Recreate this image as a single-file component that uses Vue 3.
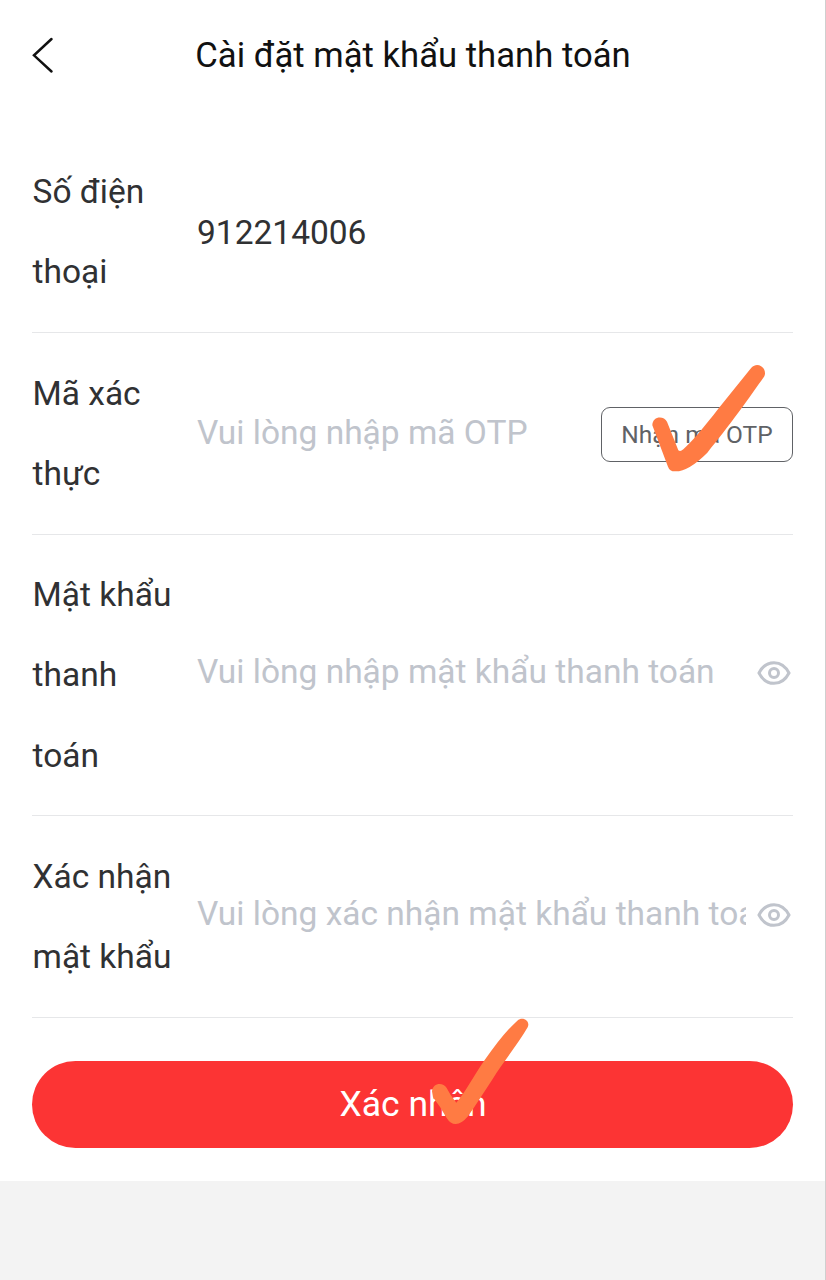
<script setup>
const rows = [
  { label: 'Số điện thoại', value: '912214006', size: 'two' },
  { label: 'Mã xác thực', hint: 'Vui lòng nhập mã OTP', otp: true, size: 'two' },
  { label: 'Mật khẩu thanh toán', hint: 'Vui lòng nhập mật khẩu thanh toán', eye: true, size: 'three' },
  { label: 'Xác nhận mật khẩu', hint: 'Vui lòng xác nhận mật khẩu thanh toán', eye: true, size: 'two' },
]
</script>

<template>
  <div class="page">
    <main class="sheet">
      <header class="bar">
        <svg class="back" width="24" height="38" viewBox="0 0 24 38"><path d="M19.5 3 2 19.3 19.5 35.5" /></svg>
        <h1>Cài đặt mật khẩu thanh toán</h1>
      </header>
      <section class="form">
        <div v-for="row in rows" :key="row.label" class="row" :class="row.size">
          <label>{{ row.label }}</label>
          <span v-if="row.value" class="field value">{{ row.value }}</span>
          <span v-else class="field hint" :class="{ raised: row.eye }">{{ row.hint }}</span>
          <button v-if="row.otp" class="otp">
            Nhận mã OTP
            <svg class="tick" width="236" height="140" viewBox="0 0 708 420"><path d="M187 226C187 197 222 196 231 215L265 301Q271 306 280 298C306 275 342 232 386 175L484 53C504 32 533 56 523 79C484 135 414 233 352 308Q296 364 257 364Q239 365 234 350Z" /></svg>
          </button>
          <svg v-if="row.eye" class="eye" width="34" height="26" viewBox="0 0 34 26"><path d="M2 13C9 -.8 25 -.8 32 13C25 26.8 9 26.8 2 13Z" /><circle cx="17" cy="13" r="4.5" /></svg>
        </div>
      </section>
      <button class="submit">
        Xác nhận
        <svg class="tick" width="130" height="140" viewBox="0 0 390 420"><path d="M36 274C38 248 69 245 80 264Q91 287 109 308C138 275 162 225 194 180C228 133 260 90 292 62C309 47 332 64 323 82C297 128 249 187 218 237C190 280 168 315 144 349Q125 372 107 372Q91 372 80 354Q62 321 39 292Z" /></svg>
      </button>
    </main>
  </div>
</template>

<style>
body { background: #f3f3f3; }
</style>
<style scoped>
.page { box-sizing: border-box; height: 1280px; border-right: 1px solid #cfcfcf; background: #f3f3f3; font-family: Roboto, sans-serif; color: #303133; overflow: hidden; }
.sheet { box-sizing: border-box; height: 1181px; padding: 0 32px; background: #fff; }
.bar { display: flex; align-items: center; height: 110px; }
.back { flex: none; }
.back path { fill: none; stroke: #111; stroke-width: 2.5; stroke-linecap: round; }
h1 { flex: 1; margin: 0 23px 0 0; text-align: center; font-size: 34.7px; font-weight: 400; color: #111; white-space: nowrap; }
.form { padding-top: 21px; }
.row { box-sizing: border-box; display: flex; align-items: center; border-bottom: 1px solid #e6e7e9; }
.two { height: 202px; }
.three { height: 281px; }
label { box-sizing: border-box; flex: none; width: 145px; margin: 1px 20px 0 0; padding-left: .5px; font-size: 33.5px; line-height: 80.4px; }
.field { flex: 1; min-width: 0; overflow: hidden; white-space: nowrap; font-size: 33.5px; }
.value { padding-top: 1px; }
.hint { color: #c0c4cc; padding-bottom: 2px; }
.hint.raised { padding-bottom: 7px; }
.otp { position: relative; box-sizing: border-box; width: 192px; height: 55px; margin-top: 2px; padding: 0; border: 1px solid #606266; border-radius: 9px; background: #fff; color: #606266; font: 24.5px Roboto, sans-serif; }
.tick { position: absolute; pointer-events: none; overflow: visible; }
.tick path { fill: #ff7b43; }
.otp .tick { left: -12px; top: -58px; }
.eye { flex: none; margin: 0 2px 4px 11px; fill: none; stroke: #c0c4cc; stroke-width: 3; }
.submit { position: relative; display: block; width: 761px; height: 87px; margin-top: 43px; padding: 0 0 2px 1px; border: 0; border-radius: 44px; background: #fc3434; color: #fff; font: 35.5px Roboto, sans-serif; }
.submit .tick { left: 388px; top: -61px; }
</style>
